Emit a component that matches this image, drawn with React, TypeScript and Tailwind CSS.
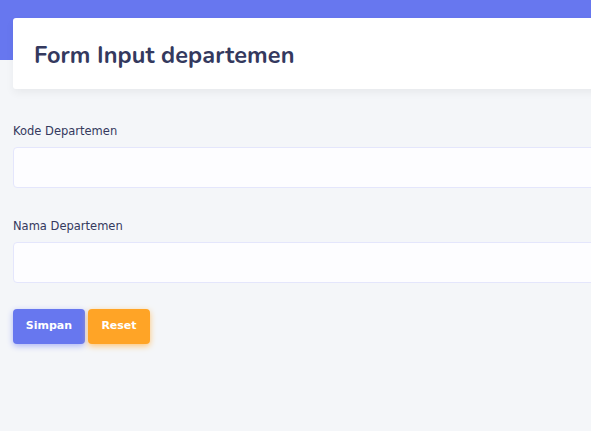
export default function App() {
  return (
    <div className="w-[591px] h-[431px] overflow-hidden bg-[#f4f6f9]">
      <div className="w-[760px]">
        <div className="h-[60px] bg-[#6777ef]" />

        <div className="-mt-[42px] ml-[13px] h-[71px] flex items-center pl-[21px] pt-[4px] bg-white rounded-[3px] shadow-[0_4px_8px_rgba(0,0,0,0.05)]">
          <h1 className="text-[23.5px] font-bold text-[#34395e] font-['Nunito','Noto_Sans',sans-serif] tracking-[0.1px]">
            Form Input departemen
          </h1>
        </div>

        <form className="ml-[13px] mt-[34px] flex flex-col font-['DejaVu_Sans',sans-serif]">
          <div className="flex flex-col gap-[7px]">
            <label className="text-[11.5px] leading-[17px] text-[#34395e]">Kode Departemen</label>
            <input className="h-[41px] bg-[#fdfdff] border border-[#e4e6fc] rounded-[4px] outline-none" />
          </div>

          <div className="flex flex-col gap-[7px] mt-[30px]">
            <label className="text-[11.5px] leading-[17px] text-[#34395e]">Nama Departemen</label>
            <input className="h-[41px] bg-[#fdfdff] border border-[#e4e6fc] rounded-[4px] outline-none" />
          </div>

          <div className="flex gap-[3px] mt-[26px]">
            <button type="button" className="w-[72px] h-[35px] rounded-[4px] bg-[#6777ef] text-white text-[11px] font-bold shadow-[0_2px_6px_#acb5f6]">
              Simpan
            </button>
            <button type="reset" className="w-[62px] h-[35px] rounded-[4px] bg-[#ffa426] text-white text-[11px] font-bold shadow-[0_2px_6px_#ffc473]">
              Reset
            </button>
          </div>
        </form>
      </div>
    </div>
  );
}
